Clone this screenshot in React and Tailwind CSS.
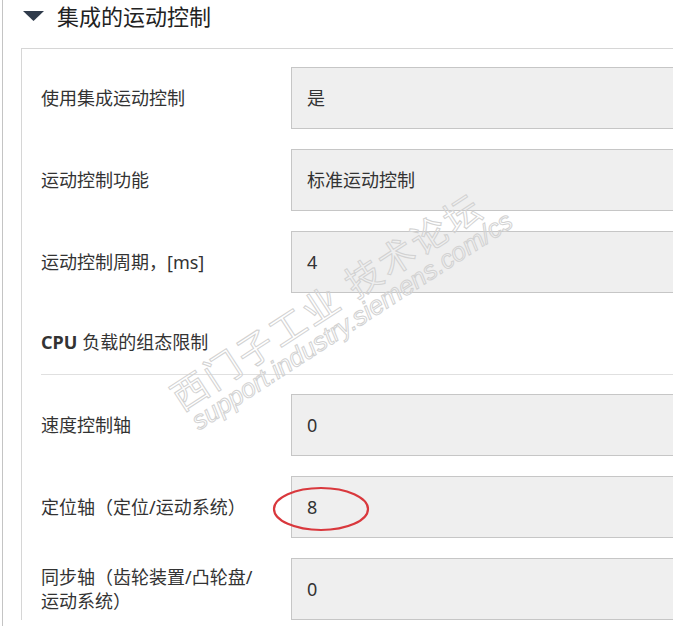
import React from "react";

const rows = [
  { label: "使用集成运动控制", value: "是" },
  { label: "运动控制功能", value: "标准运动控制" },
  { label: "运动控制周期，[ms]", value: "4" },
];

const axes = [
  { label: "速度控制轴", value: "0" },
  { label: "定位轴（定位/运动系统）", value: "8", circled: true },
  { label: ["同步轴（齿轮装置/凸轮盘/", "运动系统）"], value: "0" },
];

function Row({ label, value, circled }) {
  return (
    <div className="flex items-center h-[62px]">
      <div className="w-[250px] shrink-0 text-[18px] leading-[24px] text-[#333]">
        {Array.isArray(label) ? (
          <>
            {label[0]}
            <br />
            {label[1]}
          </>
        ) : (
          label
        )}
      </div>
      <div className="relative flex-1 h-full flex items-center border border-[#c6c6c6] bg-[#efefef] pl-[15px] text-[18px] text-[#333]">
        {value}
        {circled && (
          <svg
            className="absolute left-[-20px] top-[9px]"
            width="100"
            height="46"
            viewBox="0 0 100 46"
          >
            <ellipse cx="49" cy="23" rx="47" ry="21" fill="none" stroke="#d9383d" strokeWidth="2.2" />
          </svg>
        )}
      </div>
    </div>
  );
}

export default function App() {
  return (
    <div
      className="relative w-[673px] h-[626px] overflow-hidden bg-white"
      style={{ fontFamily: '"Noto Sans", "Noto Sans CJK SC", sans-serif' }}
    >
      <div className="ml-[2px] h-full border-l border-[#c4c4c4]">
        {/* Section header */}
        <div className="flex items-center h-[32px] mb-[16px] pl-[20px]">
          <svg width="21" height="10" viewBox="0 0 21 10" className="mr-[13px]">
            <polygon points="0,0 21,0 10.5,10" fill="#2f3b4b" />
          </svg>
          <span className="text-[22px] text-[#222]">集成的运动控制</span>
        </div>

        {/* Inner panel */}
        <div className="ml-[18px] w-[720px] border-t border-l border-[#d6d6d6] pl-[19px] pt-[18px]">
          <div className="flex flex-col gap-[20px]">
            {rows.map((r) => (
              <Row key={r.value} {...r} />
            ))}
          </div>

          <div className="h-[82px] flex items-end pb-[20px] border-b border-[#e0e0e0] text-[18px] leading-[24px] text-[#333]">
            <span className="font-bold mr-[5px]">CPU</span>负载的组态限制
          </div>

          <div className="flex flex-col gap-[20px] mt-[19px]">
            {axes.map((r, i) => (
              <Row key={i} {...r} />
            ))}
          </div>
        </div>
      </div>

      {/* Watermark */}
      <div className="pointer-events-none absolute left-[165px] top-[386px] -rotate-[33deg] origin-top-left select-none whitespace-nowrap">
        <div className="text-[36px] leading-[36px] tracking-[3px] text-transparent [-webkit-text-stroke:1px_#d2d2d2]">
          西门子工业 技术论坛
        </div>
        <div
          className="-mt-[1px] ml-[4px] text-[26px] leading-[24px] italic text-transparent [-webkit-text-stroke:1px_#d2d2d2]"
          style={{ fontFamily: '"Liberation Sans", sans-serif' }}
        >
          support.industry.siemens.com/cs
        </div>
      </div>
    </div>
  );
}
